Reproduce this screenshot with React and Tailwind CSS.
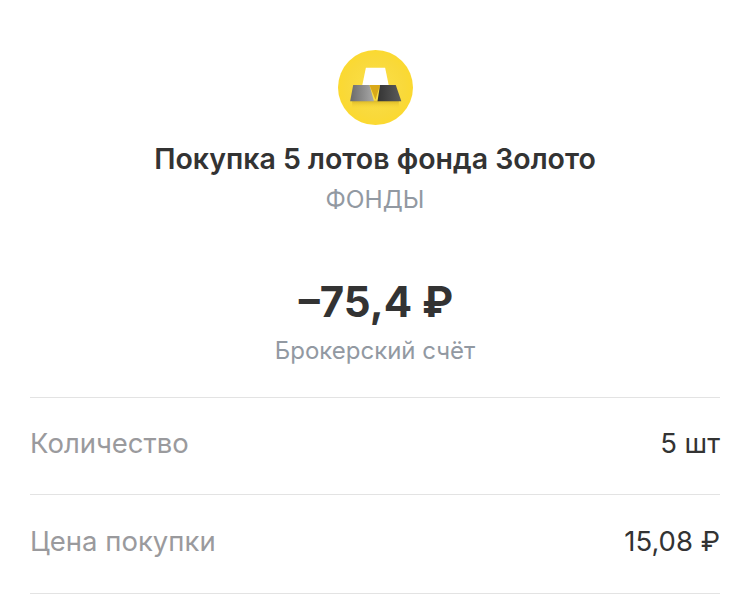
export default function App() {
  return (
    <div className="w-[750px] h-[595px] overflow-hidden bg-white flex flex-col items-center font-['Inter','Noto_Sans',sans-serif]">
      <div className="mt-[50px] w-[75px] h-[75px]">
        <svg width="75" height="75" viewBox="0 0 74 74">
          <defs>
            <radialGradient id="bg" cx="0.5" cy="0.5" r="0.55">
              <stop offset="0" stopColor="#fbe04a" />
              <stop offset="0.7" stopColor="#f9d93a" />
              <stop offset="1" stopColor="#fcd92c" />
            </radialGradient>
            <linearGradient id="l" x1="0" y1="0" x2="1" y2="0">
              <stop offset="0" stopColor="#6b6b6b" />
              <stop offset="1" stopColor="#a8a8a8" />
            </linearGradient>
            <linearGradient id="r" x1="0" y1="0" x2="1" y2="0">
              <stop offset="0" stopColor="#343434" />
              <stop offset="1" stopColor="#5c5c5c" />
            </linearGradient>
            <linearGradient id="sh" x1="0" y1="0" x2="0" y2="1">
              <stop offset="0" stopColor="#c9a51c" stopOpacity="0.7" />
              <stop offset="1" stopColor="#fbd936" stopOpacity="0" />
            </linearGradient>
          </defs>
          <circle cx="37" cy="37" r="37" fill="url(#bg)" />
          <rect x="14" y="50" width="46" height="8" fill="url(#sh)" />
          <path d="M27.5 17.5H46.5L50 34.5H24Z" fill="#ffffff" />
          <path d="M31 34.5H41.5L37 49Z" fill="#d9a91a" />
          <path d="M15 34.5H31L35.5 50.5H12Z" fill="url(#l)" />
          <path d="M41.5 34.5H57L62.5 50.5H39Z" fill="url(#r)" />
        </svg>
      </div>
      <h1 className="mt-[18px] text-[28.5px] leading-[32px] font-semibold text-[#333333] whitespace-nowrap">Покупка 5 лотов фонда Золото</h1>
      <div className="mt-[10px] text-[24.5px] leading-[28px] text-[#9299a2] whitespace-nowrap">ФОНДЫ</div>
      <div className="mt-[63px] mb-[1px] pl-[2px] text-[42px] leading-[52px] font-bold text-[#333333] whitespace-nowrap">–75,4 ₽</div>
      <div className="mt-[8px] text-[24px] leading-[28px] text-[#9299a2] whitespace-nowrap">Брокерский счёт</div>
      <div className="mt-[32px] w-[690px] flex flex-col border-t border-[#e3e3e3]">
        <div className="h-[97px] pb-[5px] flex items-center justify-between border-b border-[#e3e3e3] text-[27.5px]">
          <span className="text-[#9a9a9d]">Количество</span>
          <span className="text-[#333333]">5 шт</span>
        </div>
        <div className="h-[99px] pb-[5px] flex items-center justify-between border-b border-[#e3e3e3] text-[27.5px]">
          <span className="text-[#9a9a9d]">Цена покупки</span>
          <span className="text-[#333333]">15,08 ₽</span>
        </div>
      </div>
    </div>
  );
}
